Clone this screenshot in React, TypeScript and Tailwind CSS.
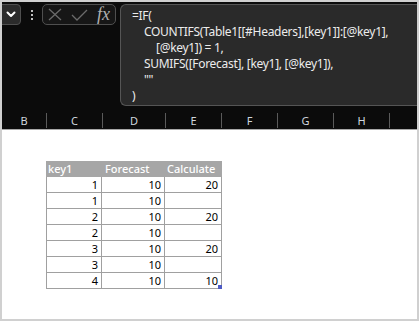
import React from "react";

const cols = [
  { l: "B", w: 45 },
  { l: "C", w: 56 },
  { l: "D", w: 63 },
  { l: "E", w: 56 },
  { l: "F", w: 56 },
  { l: "G", w: 56 },
  { l: "H", w: 56 },
  { l: "", w: 40 },
];

const rows: [string, string, string][] = [
  ["1", "10", "20"],
  ["1", "10", ""],
  ["2", "10", "20"],
  ["2", "10", ""],
  ["3", "10", "20"],
  ["3", "10", ""],
  ["4", "10", "10"],
];

const lines: { t: string; i: number }[] = [
  { t: "=IF(", i: 0 },
  { t: "COUNTIFS(Table1[[#Headers],[key1]]:[@key1],", i: 1 },
  { t: "[@key1]) = 1,", i: 2 },
  { t: "SUMIFS([Forecast], [key1], [@key1]),", i: 1 },
  { t: '""', i: 1 },
  { t: ")", i: 0 },
];

export default function App() {
  const font = { fontFamily: '"Noto Sans", "Open Sans", sans-serif' };
  return (
    <div className="w-[419px] h-[321px] bg-[#d0d0d0] p-[2px] overflow-hidden" style={font}>
      <div className="w-[415px] h-[317px] flex flex-col overflow-hidden">
        {/* dark top */}
        <div className="h-[127px] bg-[#0b0b0b] flex flex-col shrink-0">
          <div className="flex items-start pt-[2px] h-[111px]">
            {/* name box */}
            <div className="ml-[-6px] w-[25px] h-[21px] bg-[#2b2b2b] border border-[#4f4f4f] rounded-[4px] flex items-center justify-end pr-[4px]">
              <svg width="10" height="7" viewBox="0 0 10 7">
                <path d="M1.5 1.5 L5 5 L8.5 1.5" stroke="#ffffff" strokeWidth="2" fill="none" strokeLinecap="round" strokeLinejoin="round" />
              </svg>
            </div>
            {/* dots */}
            <div className="w-[21px] h-[21px] flex flex-col items-center justify-center gap-[2px]">
              <div className="w-[2px] h-[2px] bg-[#c0c0c0]" />
              <div className="w-[2px] h-[2px] bg-[#c0c0c0]" />
              <div className="w-[2px] h-[2px] bg-[#c0c0c0]" />
            </div>
            {/* fx box */}
            <div className="w-[74px] h-[21px] bg-[#161616] border border-[#4f4f4f] rounded-[5px] flex items-center pl-[5px]">
              <svg width="14" height="13" viewBox="0 0 14 13">
                <path d="M1 1 L13 12 M13 1 L1 12" stroke="#6b6b6b" strokeWidth="1.3" fill="none" />
              </svg>
              <svg width="17" height="12" viewBox="0 0 17 12" className="ml-[9px]">
                <path d="M1 6 L6 11 L16 1" stroke="#6b6b6b" strokeWidth="1.3" fill="none" />
              </svg>
              <span className="ml-[9px] text-[18px] leading-none italic text-[#b0b0b0] mt-[-2px]" style={{ fontFamily: '"Liberation Serif", "DejaVu Serif", serif' }}>
                fx
              </span>
            </div>
            {/* formula box */}
            <div className="ml-[4px] flex-1 h-[102px] bg-[#2a2a2a] border border-r-0 border-[#555555] rounded-l-[6px] pl-[11px] pt-[3px]">
              {lines.map((ln, k) => (
                <div
                  key={k}
                  className="h-[16px] leading-[16px] text-[12px] text-[#ececec] whitespace-nowrap tracking-[-0.3px]"
                  style={{ paddingLeft: ln.i * 12 }}
                >
                  {ln.t}
                </div>
              ))}
            </div>
          </div>
          {/* column headers */}
          <div className="flex h-[16px] mt-auto">
            {cols.map((c, k) => (
              <div
                key={k}
                className="shrink-0 h-[15px] border-r border-[#5a5a5a] flex items-center justify-center text-[11px] leading-none text-[#cfd6de]"
                style={{ width: c.w }}
              >
                {c.l}
              </div>
            ))}
          </div>
        </div>
        <div className="h-px bg-[#a8a8a8] shrink-0" />
        {/* sheet */}
        <div className="flex-1 bg-white pt-[31px] pl-[44px]">
          <div className="w-[176px] relative">
            <div className="flex h-[16px] bg-[#a6a6a6] text-white text-[11px] leading-[16px] font-medium">
              <div className="w-[56px] pl-[2px]">key1</div>
              <div className="w-[63px] pl-[3px]">Forecast</div>
              <div className="w-[57px] pl-[2px]">Calculate</div>
            </div>
            <div className="border-l border-[#a0a0a0]">
              {rows.map((r, k) => (
                <div key={k} className="flex h-[16px] border-b border-[#a0a0a0] text-[11px] leading-[15px] text-black">
                  <div className="w-[55px] border-r border-[#a0a0a0] text-right pr-[3px]">{r[0]}</div>
                  <div className="w-[63px] border-r border-[#a0a0a0] text-right pr-[3px]">{r[1]}</div>
                  <div className="w-[57px] border-r border-[#a0a0a0] text-right pr-[3px]">{r[2]}</div>
                </div>
              ))}
            </div>
            <div className="absolute right-0 bottom-0 w-[4px] h-[4px] bg-[#4e5bc4]" />
          </div>
        </div>
      </div>
    </div>
  );
}
